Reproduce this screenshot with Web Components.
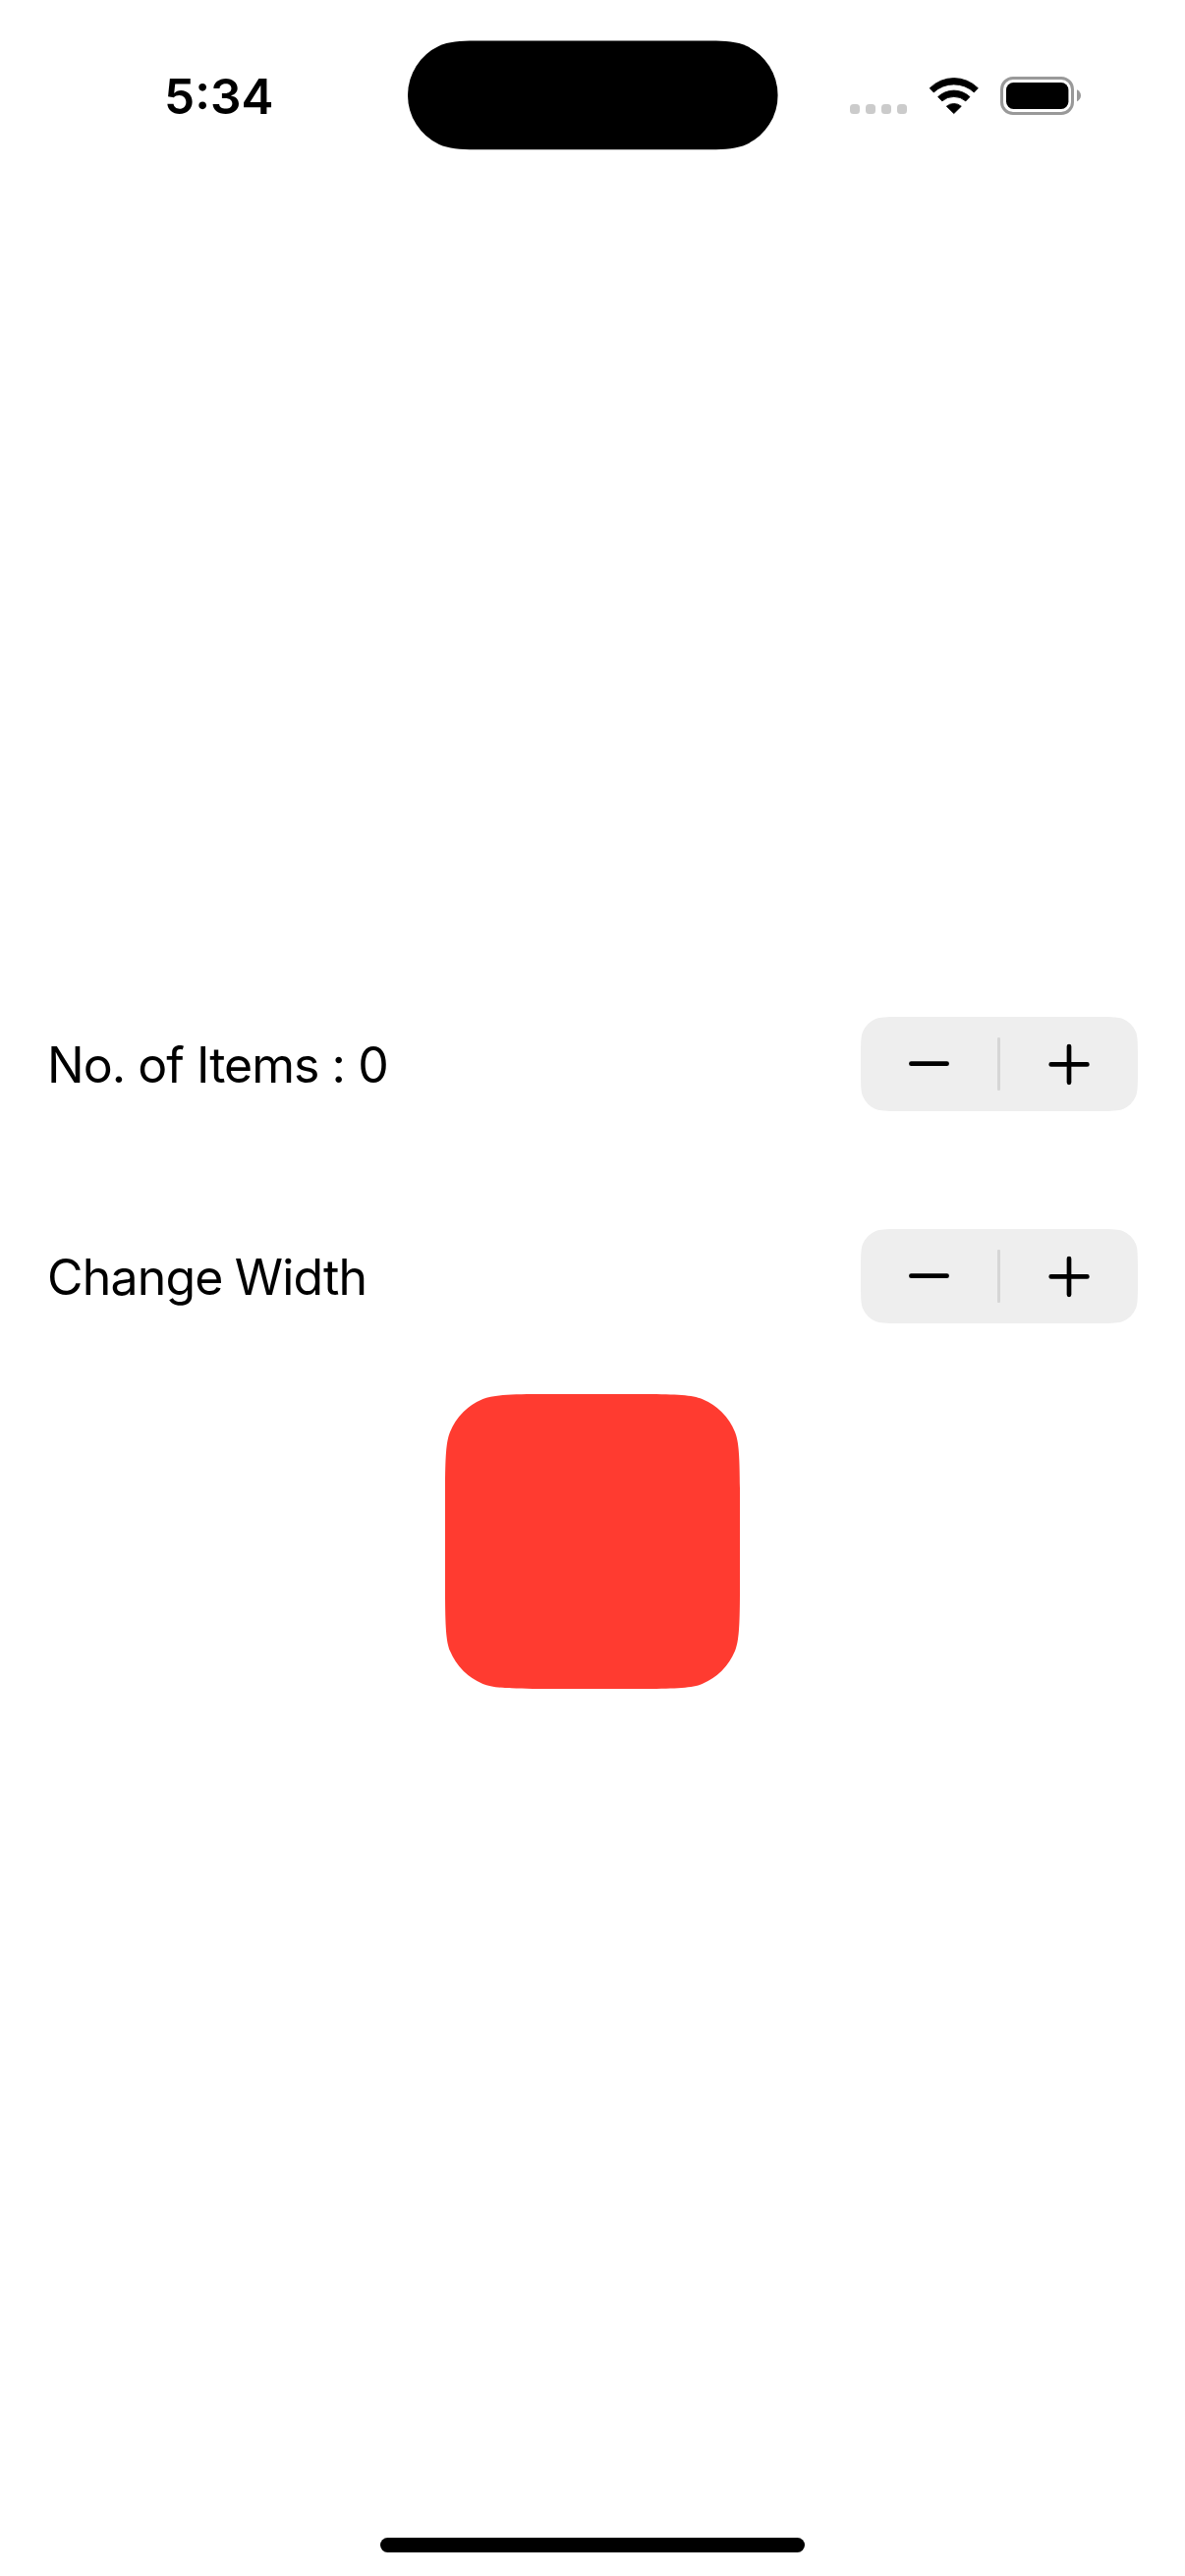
<!DOCTYPE html>
<html lang="en">
<head>
<meta charset="utf-8">
<title>Stepper</title>
<style>
  html, body { margin: 0; background: #fff; }
  body { width: 1206px; height: 2622px; overflow: hidden; color: #000; font-family: Inter, "Liberation Sans", sans-serif; }
</style>
</head>
<body>
<phone-screen>
  <status-bar slot="status" time="5:34"></status-bar>
  <stepper-row style="--tracking:-.96px">No. of Items : 0</stepper-row>
  <stepper-row style="--tracking:-.8px;--word-gap:-1.3px">Change Width</stepper-row>
  <smooth-box w="300" h="300" r="63" color="#ff3b30"></smooth-box>
</phone-screen>
<script>
const attach = (el, html) => { el.attachShadow({ mode: 'open' }).innerHTML = html; };

/* Rectangle whose corners are circular arcs that ease gradually into its straight edges. */
function smoothPath(w, h, r) {
  const [a, b, bt, c, ct, d, e] = [1.52, 1.03, 0.003, 0.763, 0.015, 0.61, 0.08].map(v => v * r);
  const arc = `A${r} ${r} 0 0 1 `;
  return `M${a} 0H${w - a}
    C${w - b} ${bt} ${w - c} ${ct} ${w - d} ${e} ${arc}${w - e} ${d} C${w - ct} ${c} ${w - bt} ${b} ${w} ${a}
    V${h - a}
    C${w - bt} ${h - b} ${w - ct} ${h - c} ${w - e} ${h - d} ${arc}${w - d} ${h - e} C${w - c} ${h - ct} ${w - b} ${h - bt} ${w - a} ${h}
    H${a}
    C${b} ${h - bt} ${c} ${h - ct} ${d} ${h - e} ${arc}${e} ${h - d} C${ct} ${h - c} ${bt} ${h - b} 0 ${h - a}
    V${a}
    C${bt} ${b} ${ct} ${c} ${e} ${d} ${arc}${d} ${e} C${c} ${ct} ${b} ${bt} ${a} 0Z`;
}

customElements.define('smooth-box', class extends HTMLElement {
  connectedCallback() {
    const n = k => Number(this.getAttribute(k));
    const w = n('w'), h = n('h');
    attach(this, `<style>:host{display:block;width:${w}px;height:${h}px}svg{display:block}</style>
      <svg width="${w}" height="${h}"><path fill="${this.getAttribute('color')}" d="${smoothPath(w, h, n('r'))}"/></svg>`);
  }
});

customElements.define('value-stepper', class extends HTMLElement {
  connectedCallback() {
    attach(this, `<style>
      :host{display:grid;width:282px;height:96px;flex:none}
      smooth-box,.controls{grid-area:1/1}
      .controls{display:flex;align-items:center;position:relative}
      button{all:unset;width:139px;height:96px;display:flex;align-items:center;justify-content:center}
      i+button{width:140px}
      i{width:3px;height:54px;background:#d6d6d6;border-radius:1px}
      svg{display:block}
      path{stroke:#000;stroke-width:4.7;stroke-linecap:round}
      </style>
      <smooth-box w="282" h="96" r="25" color="#eee"></smooth-box>
      <div class="controls">
        <button aria-label="Decrement"><svg width="43" height="44"><path d="M3.4 21.7H39.6"/></svg></button>
        <i></i>
        <button aria-label="Increment"><svg width="44" height="44"><path d="M3.7 22.4H40.4M22 4V40.8"/></svg></button>
      </div>`);
  }
});

customElements.define('stepper-row', class extends HTMLElement {
  connectedCallback() {
    attach(this, `<style>
      :host{display:flex;justify-content:space-between;align-items:center;width:1110px;height:96px}
      .label{font-size:50px;line-height:60px;padding-top:1px;white-space:nowrap;letter-spacing:var(--tracking,0);word-spacing:var(--word-gap,0)}
      </style>
      <span class="label"><slot></slot></span><value-stepper></value-stepper>`);
  }
});

customElements.define('status-bar', class extends HTMLElement {
  connectedCallback() {
    attach(this, `<style>
      :host{display:flex;height:177px;box-sizing:border-box;padding:41px 0 0 167px}
      .time,.island,.icons{flex:none}
      .time{width:248px;font-size:49.5px;font-weight:600;line-height:60px;padding-top:27px}
      .island{width:377px;height:112px}
      .icons{display:flex;padding:37px 0 0 73px;height:40px}
      .dots{display:flex;gap:6px;padding-top:28px;width:80px}
      .dots i{width:10px;height:10px;border-radius:3.5px;background:#cbcbcb}
      svg{display:block;flex:none}
      .battery{margin-left:21px}
      </style>
      <span class="time">${this.getAttribute('time')}</span>
      <svg class="island" viewBox="0 0 377 112"><g transform="translate(0 .6)"><path d="M68 0H308.6C322.6 0 335.6 1 344.7 5.2A55.3 55.3 0 0 1 344.7 105.4C335.6 109.6 322.6 110.6 308.6 110.6H68C54 110.6 41 109.6 31.9 105.4A55.3 55.3 0 0 1 31.9 5.2C41 1 54 0 68 0Z"/></g></svg>
      <div class="icons">
        <div class="dots"><i></i><i></i><i></i><i></i></div>
        <svg width="52" height="40" viewBox="0 0 52 40" stroke="#000" stroke-width=".8" stroke-linejoin="round">
          <path d="M1.2 11.7A34.8 34.8 0 0 1 50.4 11.7L46.3 16A30 30 0 0 0 5.3 16Z"/>
          <path d="M9.6 20.6A23.4 23.4 0 0 1 42 20.6L37.8 24.9A18.3 18.3 0 0 0 13.8 24.9Z"/>
          <path d="M18.3 30.2A11.5 11.5 0 0 1 33.3 30.2L25.8 37.6Z"/>
        </svg>
        <svg class="battery" width="84" height="40" viewBox="0 0 84 40">
          <rect x="1.5" y="1.5" width="72" height="36" rx="11.5" fill="none" stroke="#999" stroke-width="3"/>
          <rect x="6" y="6" width="63.4" height="27" rx="7.5"/>
          <path fill="#999" d="M78 13.3C80.4 14.3 82 16.7 82 19.3C82 21.9 80.4 24.3 78 25.3Z"/>
        </svg>
      </div>`);
  }
});

customElements.define('phone-screen', class extends HTMLElement {
  connectedCallback() {
    attach(this, `<style>
      :host{display:flex;flex-direction:column;width:1206px;height:2622px;background:#fff}
      main{flex:1;display:flex;flex-direction:column;align-items:center;padding-top:858px}
      ::slotted(stepper-row){margin-bottom:120px}
      ::slotted(smooth-box){margin-top:-48px}
      .home{width:432px;height:15px;border-radius:8px;background:#000;margin:0 auto 24px}
      </style>
      <slot name="status"></slot><main><slot></slot></main><div class="home"></div>`);
  }
});
</script>
</body>
</html>
